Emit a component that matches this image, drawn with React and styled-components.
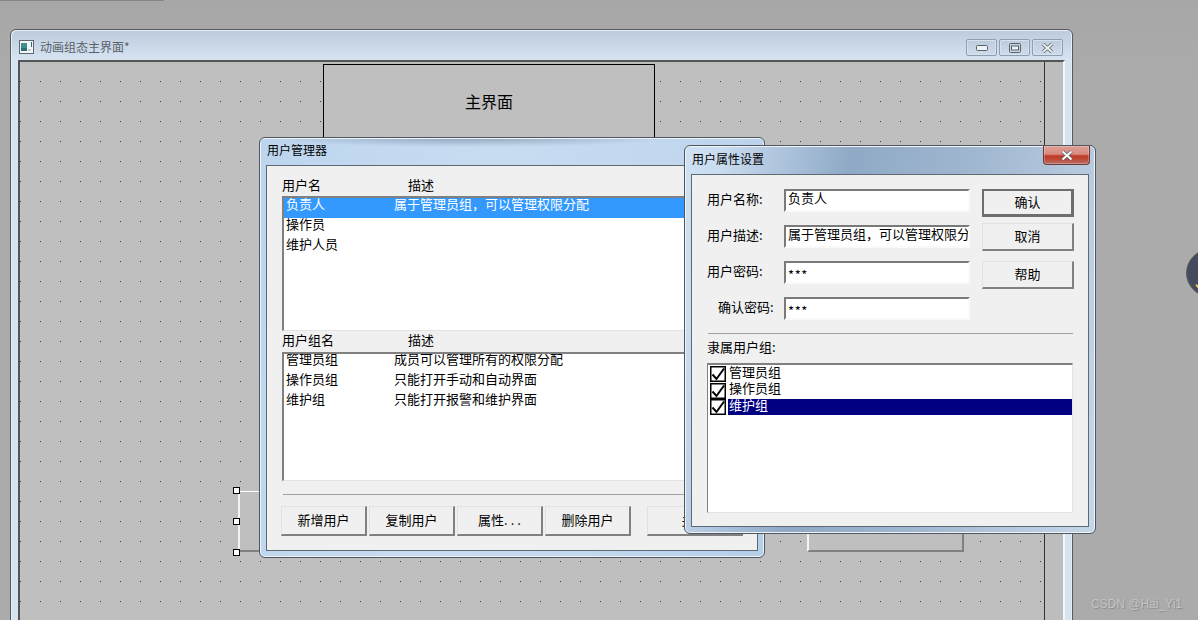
import React from 'react'
import styled, { createGlobalStyle } from 'styled-components'

const Global = createGlobalStyle`
  html, body {
    margin: 0;
    padding: 0;
    background: #ababab;
    overflow: hidden;
  }
  body {
    font-family: "Noto Sans CJK SC", "Liberation Sans", sans-serif;
    font-size: 13px;
    color: #000;
  }
`

const Desktop = styled.div`
  position: relative;
  width: 1198px;
  height: 620px;
  overflow: hidden;
  padding: 29px 0 0 10px;
  box-sizing: border-box;
  background: linear-gradient(#a7a7a7, #ababab 80px);
`

const TopRule = styled.div`
  position: absolute;
  left: 0;
  top: 0;
  width: 164px;
  height: 1px;
  background: #858585;
`

const MainWindow = styled.div`
  box-sizing: border-box;
  width: 1063px;
  height: 620px;
  display: flex;
  flex-direction: column;
  padding: 0 7px;
  border: 1px solid #555a60;
  border-radius: 6px 6px 0 0;
  background: linear-gradient(#bccbdc, #d6e4f2 30px);
  box-shadow: inset 1px 1px 0 #e8eef5, inset -1px 0 0 #e8eef5;
`

const MainTitle = styled.div`
  height: 30px;
  flex: none;
  display: flex;
  align-items: center;
  padding: 0 2px 0 1px;
`

const MainTitleText = styled.span`
  margin-left: 6px;
  margin-top: 3px;
  font-size: 12px;
  line-height: 14px;
  color: #596068;
  flex: 1;
`

const WindowIcon = styled.svg`
  width: 15px;
  height: 14px;
  margin-top: 3px;
  flex: none;
`

const CaptionButtons = styled.div`
  display: flex;
  gap: 2px;
  margin-top: 5px;
`

const CaptionButton = styled.div`
  box-sizing: border-box;
  width: 31px;
  height: 17px;
  display: flex;
  align-items: center;
  justify-content: center;
  border: 1px solid #8d9db3;
  border-radius: 2px;
  background: linear-gradient(#bccbdd, #cfdcea);
  box-shadow: inset 0 0 0 1px #d7e2ee;
`

const Client = styled.div`
  flex: 1;
  display: flex;
  border-left: 2px solid #555;
  border-top: 2px solid #555;
  border-right: 2px solid #f4f7fa;
  background: #bdbdbd;
  min-height: 0;
  width: 1047px;
  box-sizing: border-box;
`

const Canvas = styled.div`
  position: relative;
  width: 1024px;
  flex: none;
  box-sizing: content-box;
  border-right: 1px solid #333;
  background-color: #bfbfbf;
  background-image: radial-gradient(circle at 0.5px 0.5px, #3a3a3a 0.7px, transparent 0.75px);
  background-size: 20px 20px;
  background-position: 20px 19px;
`

const TitleBox = styled.div`
  position: absolute;
  left: 303px;
  top: 2px;
  width: 332px;
  height: 90px;
  display: flex;
  justify-content: center;
  padding-top: 26px;
  box-sizing: border-box;
  border: 1px solid #000;
  background: #bfbfbf;
  font-size: 16px;
  line-height: 20px;
`

const RaisedBox = styled.div`
  position: absolute;
  left: ${p => p.$x}px;
  top: ${p => p.$y}px;
  width: ${p => p.$w}px;
  height: ${p => p.$h}px;
  box-sizing: border-box;
  background: #bfbfbf;
  border-top: 1px solid #fff;
  border-left: 2px solid #f4f4f4;
  border-right: 2px solid #808080;
  border-bottom: 2px solid #808080;
`

const Handle = styled.div`
  position: absolute;
  left: 213px;
  top: ${p => p.$y}px;
  width: 7px;
  height: 7px;
  box-sizing: border-box;
  border: 1px solid #000;
  background: #fff;
`

const Dialog = styled.div`
  position: absolute;
  left: ${p => p.$x}px;
  top: ${p => p.$y}px;
  width: ${p => p.$w}px;
  height: ${p => p.$h}px;
  box-sizing: border-box;
  display: flex;
  flex-direction: column;
  padding: 0 6px 6px;
  border: 1px solid #50565e;
  border-radius: 6px;
  box-shadow: inset 0 0 0 1px #eef4fa;
  background: ${p => p.$bg};
`

const DialogTitle = styled.div`
  height: ${p => p.$h}px;
  flex: none;
  box-sizing: border-box;
  padding: 0 0 3px 1px;
  display: flex;
  align-items: center;
  justify-content: space-between;
  font-size: 12px;
  line-height: 14px;
  position: relative;
`

const CloseButton = styled.div`
  position: absolute;
  right: -1px;
  top: 0;
  width: 47px;
  height: 19px;
  box-sizing: border-box;
  display: flex;
  align-items: center;
  justify-content: center;
  border: 1px solid #6b3a38;
  border-top: none;
  border-radius: 0 0 4px 4px;
  background: linear-gradient(#dc9f97, #d98a80 45%, #bd3a28 55%, #c04a38 75%, #b5736a);
  box-shadow: inset 0 0 0 1px rgba(255, 255, 255, 0.25);
`

const DialogBody = styled.div`
  flex: 1;
  min-height: 0;
  box-sizing: border-box;
  display: flex;
  flex-direction: column;
  border: 1px solid #5f6973;
  background: #f0f0f0;
  padding: ${p => p.$pad};
`

const ColumnHeader = styled.div`
  height: ${p => p.$h}px;
  box-sizing: border-box;
  padding-bottom: 4px;
  display: grid;
  grid-template-columns: 126px 1fr;
  align-items: center;
  flex: none;
  line-height: 14px;
`

const ListBox = styled.div`
  height: ${p => p.$h}px;
  flex: none;
  box-sizing: border-box;
  overflow: hidden;
  background: #fff;
  border-top: 2px solid #808080;
  border-left: 2px solid #808080;
  border-right: 1px solid #e3e3e3;
  border-bottom: 1px solid #e3e3e3;
`

const ListRow = styled.div`
  height: 20px;
  display: grid;
  grid-template-columns: 108px 1fr;
  padding-left: 2px;
  line-height: 12px;
  white-space: nowrap;
  margin-top: ${p => p.$shift || 0}px;
  background: ${p => (p.$selected ? '#3399ff' : 'transparent')};
  color: ${p => (p.$selected ? '#fff' : '#000')};
`

const Divider = styled.div`
  height: 1px;
  flex: none;
  background: #a0a0a0;
  margin: ${p => p.$margin};
`

const ButtonRow = styled.div`
  display: flex;
  gap: 2px;
  flex: none;
  margin-left: -1px;
`

const PushButton = styled.div`
  box-sizing: border-box;
  width: ${p => p.$w}px;
  height: ${p => p.$h}px;
  margin-left: ${p => p.$gap || 0}px;
  margin-bottom: ${p => p.$after || 0}px;
  padding-bottom: 2px;
  flex: none;
  display: flex;
  align-items: center;
  justify-content: center;
  line-height: 14px;
  background: #f0f0f0;
  border-top: 1px solid #e2e2e2;
  border-left: 1px solid #e2e2e2;
  border-right: 2px solid #808080;
  border-bottom: 2px solid #808080;
  ${p => p.$primary && `
    border: 2px solid #6e6e6e;
    border-bottom-width: 3px;
    border-right-width: 3px;
  `}
`

const Dots = styled.span`
  letter-spacing: 3px;
  margin-right: -3px;
`

const PropertyTop = styled.div`
  display: flex;
  gap: 12px;
`

const Fields = styled.div`
  width: 263px;
  display: flex;
  flex-direction: column;
  gap: 13px;
`

const Field = styled.div`
  display: flex;
  align-items: center;
  height: 23px;
`

const FieldLabel = styled.span`
  width: 77px;
  flex: none;
  box-sizing: border-box;
  padding-left: ${p => p.$indent || 0}px;
  padding-bottom: 4px;
  white-space: nowrap;
`

const TextField = styled.div`
  width: 186px;
  height: 23px;
  flex: none;
  box-sizing: border-box;
  overflow: hidden;
  white-space: nowrap;
  background: #fff;
  padding: 0 2px;
  line-height: ${p => (p.$secret ? 24 : 14)}px;
  letter-spacing: ${p => (p.$secret ? 0.6 : 0)}px;
  border-top: 2px solid #7a7a7a;
  border-left: 2px solid #7a7a7a;
  border-right: 2px solid #fafafa;
  border-bottom: 2px solid #fafafa;
`

const ActionColumn = styled.div`
  display: flex;
  flex-direction: column;
`

const SectionLabel = styled.div`
  height: 29px;
  line-height: 26px;
  flex: none;
`

const CheckList = styled.div`
  height: 150px;
  box-sizing: border-box;
  background: #fff;
  padding: 1px 0 0 2px;
  border-top: 2px solid #808080;
  border-left: 1px solid #808080;
  border-right: 1px solid #e3e3e3;
  border-bottom: 1px solid #e3e3e3;
`

const CheckRow = styled.div`
  display: flex;
  align-items: center;
  height: 16.4px;
`

const CheckBox = styled.svg`
  width: 16px;
  height: 16px;
  flex: none;
`

const CheckText = styled.div`
  flex: 1;
  height: 100%;
  margin-left: 2px;
  padding-left: 1px;
  line-height: 12px;
  background: ${p => (p.$selected ? '#000080' : 'transparent')};
  color: ${p => (p.$selected ? '#fff' : '#000')};
`

const Puck = styled.div`
  position: absolute;
  left: 1186px;
  top: 249px;
  width: 48px;
  height: 48px;
  border-radius: 50%;
  background: #454b5c;
  border: 1px solid #5d6068;
  box-sizing: border-box;
  overflow: hidden;
  &::after {
    content: '';
    position: absolute;
    left: 8px;
    top: 36px;
    width: 6px;
    height: 2px;
    background: #e8c84a;
    transform: rotate(50deg);
  }
`

const Watermark = styled.div`
  position: absolute;
  right: 16px;
  bottom: 9px;
  font-family: "Liberation Sans", sans-serif;
  font-size: 12px;
  line-height: 14px;
  color: #c4c4c4;
  text-shadow: 1px 1px 1px #8a8a8a;
`

const users = [
  { name: '负责人', desc: '属于管理员组，可以管理权限分配', selected: true },
  { name: '操作员', desc: '' },
  { name: '维护人员', desc: '' },
]

const groups = [
  { name: '管理员组', desc: '成员可以管理所有的权限分配' },
  { name: '操作员组', desc: '只能打开手动和自动界面' },
  { name: '维护组', desc: '只能打开报警和维护界面' },
]

const fields = [
  { label: '用户名称:', value: '负责人' },
  { label: '用户描述:', value: '属于管理员组，可以管理权限分配' },
  { label: '用户密码:', value: '***', secret: true },
  { label: '确认密码:', value: '***', secret: true, indent: 11 },
]

const actions = [
  { label: '确认', h: 28, after: 6, primary: true },
  { label: '取消', h: 28, after: 10 },
  { label: '帮助', h: 28 },
]

const Check = () => (
  <CheckBox viewBox="0 0 16 16">
    <rect x="0.75" y="0.75" width="14.5" height="14.5" fill="#fff" stroke="#000" strokeWidth="1.5" />
    <path d="M2.5 8.5 L6.5 13 L14 2.5" fill="none" stroke="#000" strokeWidth="2" />
  </CheckBox>
)

export default function App() {
  return (
    <>
      <Global />
      <Desktop>
        <TopRule />
        <MainWindow>
          <MainTitle>
            <WindowIcon viewBox="0 0 15 14">
              <rect x="0.5" y="0.5" width="14" height="13" fill="#f4f6f8" stroke="#5b6670" />
              <rect x="2" y="3" width="6" height="8" fill="#3f8f8c" />
              <rect x="2" y="8" width="6" height="3" fill="#2f6f78" />
              <rect x="9" y="9" width="3" height="2" fill="#c4c8cc" />
              <rect x="12" y="2" width="1" height="5" fill="#1f6f70" />
            </WindowIcon>
            <MainTitleText>动画组态主界面*</MainTitleText>
            <CaptionButtons>
              <CaptionButton>
                <svg width="12" height="6" viewBox="0 0 12 6">
                  <rect x="0.5" y="0.5" width="11" height="5" rx="1" fill="#eef2f6" stroke="#59616b" />
                </svg>
              </CaptionButton>
              <CaptionButton>
                <svg width="12" height="10" viewBox="0 0 12 10">
                  <rect x="0.5" y="0.5" width="11" height="9" rx="1" fill="none" stroke="#59616b" />
                  <rect x="2.5" y="3" width="7" height="4" fill="#eef2f6" stroke="#59616b" />
                </svg>
              </CaptionButton>
              <CaptionButton>
                <svg width="13" height="10" viewBox="0 0 13 10">
                  <path d="M2 1 L11 9 M11 1 L2 9" stroke="#59616b" strokeWidth="3.4" />
                  <path d="M2 1 L11 9 M11 1 L2 9" stroke="#eef2f6" strokeWidth="1.8" />
                </svg>
              </CaptionButton>
            </CaptionButtons>
          </MainTitle>
          <Client>
            <Canvas>
              <TitleBox>主界面</TitleBox>
              <RaisedBox $x={218} $y={429} $w={120} $h={61} />
              <RaisedBox $x={787} $y={429} $w={157} $h={61} />
              <Handle $y={425} />
              <Handle $y={456} />
              <Handle $y={487} />
            </Canvas>
          </Client>
        </MainWindow>

        <Dialog
          $x={259}
          $y={137}
          $w={506}
          $h={421}
          $bg="radial-gradient(ellipse 200px 9px at 210px 0, rgba(80, 100, 125, 0.45), transparent), linear-gradient(100deg, #bcd5ee, #c8dcf1 40%, #c2d8ef 70%, #b5cfe9)"
        >
          <DialogTitle $h={27}>
            <span>用户管理器</span>
          </DialogTitle>
          <DialogBody $pad="12px 15px 0">
            <ColumnHeader $h={18}>
              <span>用户名</span>
              <span>描述</span>
            </ColumnHeader>
            <ListBox $h={135}>
              {users.map(u => (
                <ListRow key={u.name} $selected={u.selected}>
                  <span>{u.name}</span>
                  <span>{u.desc}</span>
                </ListRow>
              ))}
            </ListBox>
            <ColumnHeader $h={21}>
              <span>用户组名</span>
              <span>描述</span>
            </ColumnHeader>
            <ListBox $h={129}>
              {groups.map((g, i) => (
                <ListRow key={g.name} $shift={i === 0 ? -1 : 0}>
                  <span>{g.name}</span>
                  <span>{g.desc}</span>
                </ListRow>
              ))}
            </ListBox>
            <Divider $margin="13px 0 11px 1px" />
            <ButtonRow>
              <PushButton $w={86} $h={30}>新增用户</PushButton>
              <PushButton $w={86} $h={30}>复制用户</PushButton>
              <PushButton $w={86} $h={30}>属性<Dots>...</Dots></PushButton>
              <PushButton $w={86} $h={30}>删除用户</PushButton>
              <PushButton $w={96} $h={30} $gap={14}>关闭</PushButton>
            </ButtonRow>
          </DialogBody>
        </Dialog>

        <Dialog
          $x={684}
          $y={145}
          $w={412}
          $h={389}
          $bg="linear-gradient(100deg, #cfe1f4 0, #c9dcf0 8%, #8fa9c6 35%, #9fb6cf 60%, #b7cbdf 85%, #c5d8ea)"
        >
          <DialogTitle $h={28}>
            <span>用户属性设置</span>
            <CloseButton>
              <svg width="14" height="11" viewBox="0 0 14 11">
                <path d="M2.5 1.5 L11.5 9.5 M11.5 1.5 L2.5 9.5" stroke="#5a5f66" strokeWidth="3.6" />
                <path d="M2.5 1.5 L11.5 9.5 M11.5 1.5 L2.5 9.5" stroke="#fff" strokeWidth="2" />
              </svg>
            </CloseButton>
          </DialogTitle>
          <DialogBody $pad="14px 15px 0">
            <PropertyTop>
              <Fields>
                {fields.map(f => (
                  <Field key={f.label}>
                    <FieldLabel $indent={f.indent}>{f.label}</FieldLabel>
                    <TextField $secret={f.secret}>{f.value}</TextField>
                  </Field>
                ))}
              </Fields>
              <ActionColumn>
                {actions.map(a => (
                  <PushButton key={a.label} $w={92} $h={a.h} $after={a.after} $primary={a.primary}>
                    {a.label}
                  </PushButton>
                ))}
              </ActionColumn>
            </PropertyTop>
            <Divider $margin="13px 0 0 1px" />
            <SectionLabel>隶属用户组:</SectionLabel>
            <CheckList>
              <CheckRow>
                <Check />
                <CheckText>管理员组</CheckText>
              </CheckRow>
              <CheckRow>
                <Check />
                <CheckText>操作员组</CheckText>
              </CheckRow>
              <CheckRow>
                <Check />
                <CheckText $selected>维护组</CheckText>
              </CheckRow>
            </CheckList>
          </DialogBody>
        </Dialog>

        <Puck />
        <Watermark>CSDN @Hai_Yi1</Watermark>
      </Desktop>
    </>
  )
}
